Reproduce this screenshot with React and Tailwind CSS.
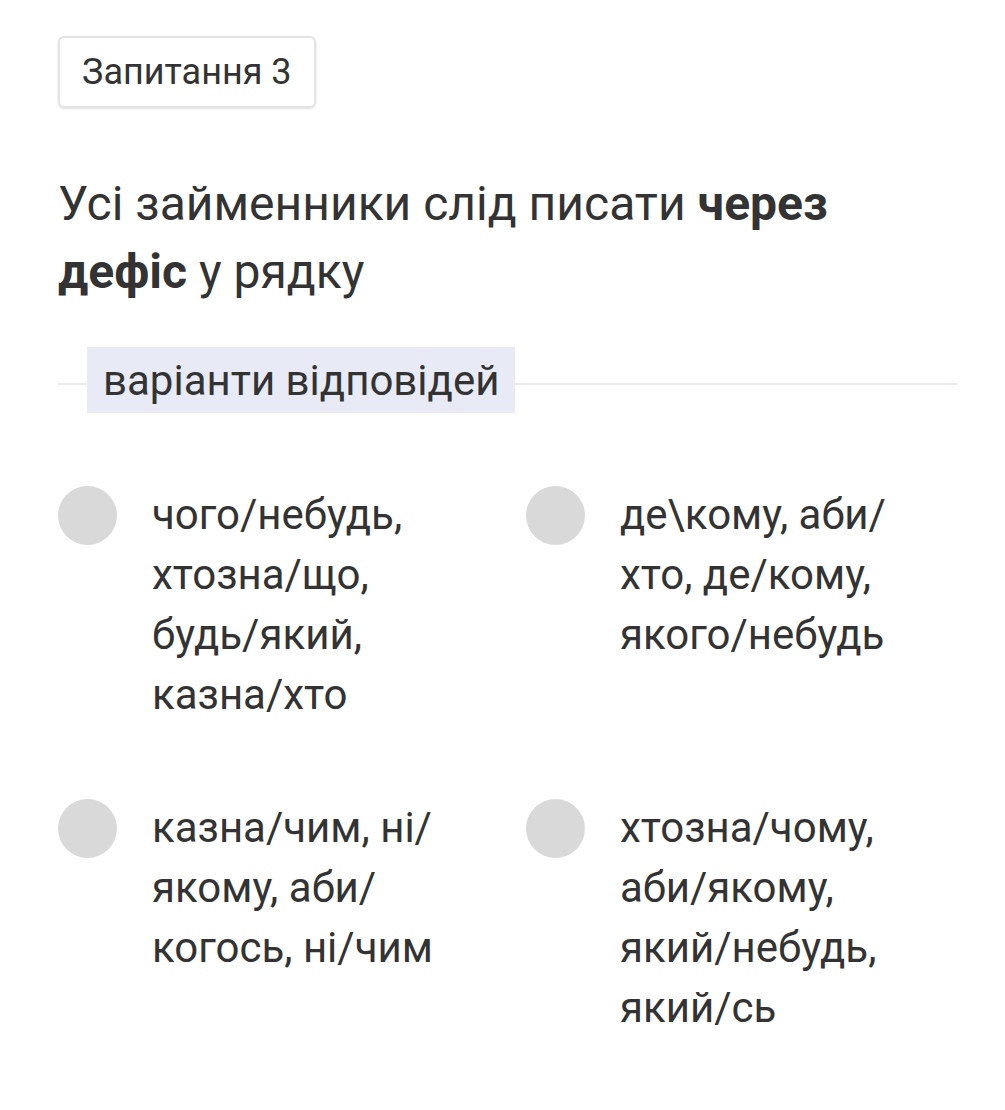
import React from 'react'

const OPTIONS = [
  'чого/небудь, хтозна/що, будь/який, казна/хто',
  'де\\кому, аби/хто, де/кому, якого/небудь',
  'казна/чим, ні/якому, аби/когось, ні/чим',
  'хтозна/чому, аби/якому, який/небудь, який/сь',
]

function Option({ text }) {
  return (
    <div className="flex items-start gap-[35px]">
      <div className="shrink-0 w-[59px] h-[59px] rounded-full bg-[#d9d9d9]" />
      <p className="w-[310px] text-[42px] leading-[60px] text-[#333333] -mt-[1px]">{text}</p>
    </div>
  )
}

export default function App() {
  return (
    <div
      className="min-h-screen bg-white pl-[58px] pr-[48px] pt-[36px] text-[#333333]"
      style={{ fontFamily: 'Roboto, "Noto Sans", sans-serif' }}
    >
      {/* Question badge */}
      <div className="inline-flex items-center h-[72px] px-[22px] border-2 border-[#e3e3e3] rounded-md shadow-sm">
        <span className="text-[36px] text-[#333333]">Запитання 3</span>
      </div>

      {/* Question */}
      <h1 className="mt-[62px] text-[48px] leading-[68px] font-normal pr-[60px]">
        Усі займенники слід писати <b className="font-bold">через дефіс</b> у рядку
      </h1>

      {/* Divider */}
      <div className="relative mt-[41px] flex items-center h-[66px]">
        <div className="absolute left-0 right-0 top-[36px] h-[2px] bg-[#e9eaf2]" />
        <span className="relative ml-[29px] bg-[#e8eaf6] px-[16px] h-[66px] flex items-center text-[42px] text-[#333333]">
          варіанти відповідей
        </span>
      </div>

      {/* Answers */}
      <div className="mt-[73px] grid grid-cols-[468px_1fr] gap-y-[74px]">
        {OPTIONS.map(t => (
          <Option key={t} text={t} />
        ))}
      </div>
    </div>
  )
}
